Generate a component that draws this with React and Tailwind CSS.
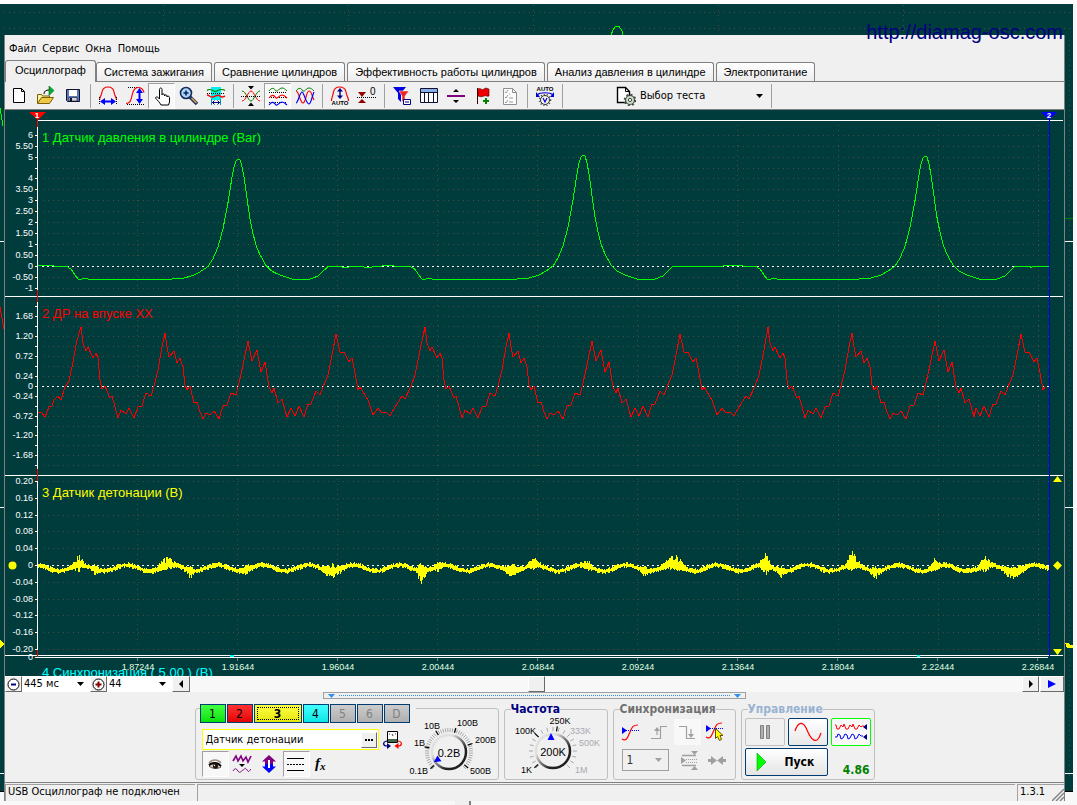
import { useState } from 'react';

const TABS = [
    'Осциллограф',
    'Система зажигания',
    'Сравнение цилиндров',
    'Эффективность работы цилиндров',
    'Анализ давления в цилиндре',
    'Электропитание',
];

const CHANNELS = [
    { id: '1', cls: 'w-[26px] bg-gradient-to-b from-[#40ff40] to-[#00e000] text-black border-[#003c74]' },
    { id: '2', cls: 'w-[26px] bg-gradient-to-b from-[#ff3030] to-[#e00000] text-black border-[#003c74]' },
    { id: '3', cls: 'w-[48px] bg-gradient-to-b from-[#ffff40] to-[#e6e600] text-black border-[#003c74] font-bold outline-1 outline-dotted outline-black -outline-offset-4' },
    { id: '4', cls: 'w-[26px] bg-gradient-to-b from-[#40ffff] to-[#00e6e6] text-black border-[#003c74]' },
    { id: '5', cls: 'w-[26px] bg-gradient-to-b from-[#cccccc] to-[#b0b0b0] text-[#808080] border-[#003c74]' },
    { id: '6', cls: 'w-[26px] bg-gradient-to-b from-[#cccccc] to-[#b0b0b0] text-[#808080] border-[#003c74]' },
    { id: 'D', cls: 'w-[26px] bg-gradient-to-b from-[#cccccc] to-[#b0b0b0] text-[#808080] border-[#003c74]' },
];

/* ---------- toolbar icons ---------- */

const ICONS = {
    new: (
        <path d="M4.5 2.5h8l3 3v11h-11zM12.5 2.5v3h3" fill="#fff" stroke="#000" />
    ),
    open: (
        <>
            <path d="M1.5 17V8.5h4l1 1.5h7v3" fill="#fff2a0" stroke="#7a6000" />
            <path d="M1.5 17.5l4-6h12l-4 6z" fill="#f0c848" stroke="#7a6000" />
            <path d="M8 8c0-3 2-4 5-4" fill="none" stroke="#000" />
            <path d="M13 0l5 4.500-5 5z" fill="#00b030" stroke="#006018" strokeWidth=".6" />
        </>
    ),
    save: (
        <>
            <path d="M3.500 3.500h13v12h-12l-1-1z" fill="#5a78b8" stroke="#101030" />
            <path d="M6 4h8v6H6z" fill="#fff" />
            <path d="M6 11.500h8V15H6z" fill="#d8d8d8" stroke="#101030" strokeWidth=".6" />
            <path d="M7 12h2v3H7z" fill="#101030" />
        </>
    ),
    width: (
        <>
            <path d="M1.500 14C1.500 11 3.500 10 4 6c.5-3 2-5 6-5s5.500 2 6 5c.5 4 2.500 5 2.500 8" fill="none" stroke="#f00" strokeWidth="1.200" />
            <path d="M1.500 11v8M18.500 11v8" stroke="#000" strokeDasharray="1 1" />
            <path d="M4 15.500h12" stroke="#00f" strokeWidth="2" />
            <path d="M2 15.500l5-3.500v7zM18 15.500L13 12v7z" fill="#00f" />
        </>
    ),
    height: (
        <>
            <path d="M3 1.500h9M2 18.500h17" stroke="#000" strokeDasharray="1 1" />
            <path d="M1 17.500c4 0 5-3 6-8s3-8 6-8c3 0 5 1.500 6 5" fill="none" stroke="#f00" strokeWidth="1.200" />
            <path d="M14.500 5v10" stroke="#00f" strokeWidth="2" />
            <path d="M14.500 2l3.500 5h-7zM14.500 18l3.500-5h-7z" fill="#00f" />
        </>
    ),
    hand: (
        <path d="M7.500 13V3.500c0-2 2.500-2 2.500 0V9c0-1.500 2.500-1.500 2.500 0v1c0-1.500 2.500-1.500 2.500 0v1c0-1.500 2.500-1 2.500.5V16l-1 3H9c-1-2.500-4-5-5.500-7 .5-2 2.500-1 4 1z" fill="#fff" stroke="#000" />
    ),
    zoom: (
        <>
            <path d="M11 11l7 7" stroke="#203060" strokeWidth="3.500" />
            <path d="M12.500 12l5 5" stroke="#d8a048" strokeWidth="1.600" />
            <circle cx="7" cy="7" r="5.500" fill="#a8d8f8" stroke="#182858" strokeWidth="1.600" />
            <path d="M4.500 7h5M7 4.500v5" stroke="#10205c" strokeWidth="1.600" />
        </>
    ),
    band: (
        <>
            <path d="M5 1h10v13H5z" fill="#00f0f0" />
            <path d="M1 4.500c3-3 6 1 8 1s6-4 10-1" fill="none" stroke="#008000" strokeWidth="1.200" />
            <path d="M1 7.500h18" stroke="#000" strokeDasharray="1 1" />
            <path d="M1 9c3 0 3 3 6 2s5-3 7-1 3 1 5 0" fill="none" stroke="#f00" strokeWidth="1.400" />
            <path d="M5.500 13v6M14.500 13v6" stroke="#0090a0" />
            <path d="M6 16.500h8M8.500 14.500l-2 2 2 2M11.500 14.500l2 2-2 2" fill="none" stroke="#000080" />
        </>
    ),
    collapse: (
        <>
            <path d="M1 5c4 0 6 10 9 10s5-10 9-10" fill="none" stroke="#008000" />
            <path d="M1 15c4 0 6-10 9-10s5 10 9 10" fill="none" stroke="#f00" />
            <path d="M0 10.500h20" stroke="#000" strokeDasharray="1 1" />
            <path d="M7 0h6l-3 3.500zM7 20h6l-3-3.500z" fill="#000" />
        </>
    ),
    stack: (
        <>
            <path d="M1 5c3-4 5-3 7 0 2 1 3-3 6-3 2 0 3 1 5 3" fill="none" stroke="#008000" />
            <path d="M1 6.500h18M1 11.500h18M1 16.500h18" stroke="#000" strokeDasharray="1 1" />
            <path d="M1 12c3-4 5-3 7 0 2 1 3-3 6-3 2 0 3 1 5 3" fill="none" stroke="#f00" strokeWidth="1.200" />
            <path d="M1 19c3-4 5-3 7 0 2 1 3-3 6-3 2 0 3 1 5 3" fill="none" stroke="#00f" strokeWidth="1.200" />
        </>
    ),
    overlay: (
        <>
            <path d="M1 5c3-4 5-3 7 0 2 1 3-3 6-3 2 0 3 1 5 3" fill="none" stroke="#008000" />
            <path d="M1 5c3 0 4 12 7 12s3-12 6-12 3 6 5 9" fill="none" stroke="#f00" strokeWidth="1.200" />
            <path d="M1 17c2 0 4-11 6-11s4 12 7 12c2 0 3-8 5-12" fill="none" stroke="#00f" strokeWidth="1.200" />
        </>
    ),
    autoHeight: (
        <>
            <path d="M1.500 15C1.500 11 3 10 3.500 6c.5-3 2-5 6-5s6 2 6.500 5c.5 4 2.500 5 2.500 9" fill="none" stroke="#f00" strokeWidth="1.200" />
            <path d="M10 4v7" stroke="#000080" strokeWidth="1.400" />
            <path d="M10 2l3 3.500H7zM10 13l3-3.500H7z" fill="#000080" />
            <text x="10" y="19" textAnchor="middle" fontSize="6" fontWeight="bold">AUTO</text>
        </>
    ),
    zero: (
        <>
            <path d="M1 6h8l-4 5zM1 17h8l-4-4z" fill="#900000" />
            <path d="M0 11.500h20" stroke="#000" strokeDasharray="1 1" />
            <text x="13" y="9" fontSize="10">0</text>
        </>
    ),
    filter: (
        <>
            <path d="M1 1h13l-5 6v9l-3-3V7z" fill="#0000e0" />
            <path d="M7 5h10l-4 5v8l-3-3v-5z" fill="#f02020" stroke="#fff" strokeWidth=".5" />
            <path d="M11.500 13.500h7v5h-7z" fill="#fff" stroke="#000080" />
            <path d="M13 16h4" stroke="#000080" />
        </>
    ),
    table: (
        <>
            <path d="M1.500 2.500h17v14h-17z" fill="#fff" stroke="#101030" />
            <path d="M2 3h16v3H2z" fill="#88b0e8" />
            <path d="M1 6.500h18M5.500 6v10M9.500 6v10M14.500 6v10" stroke="#101030" />
        </>
    ),
    split: (
        <>
            <path d="M1 10h18" stroke="#800080" strokeWidth="2" />
            <path d="M10 3l3 3H7zM10 17l3-3H7z" fill="#000" />
        </>
    ),
    flag: (
        <>
            <path d="M4.500 2v16" stroke="#400000" />
            <path d="M5 3c3-2 3 2 6 0s3 0 5 0v7c-2 1-3-1-5 0s-3 1-6 0z" fill="#f00000" stroke="#500000" strokeWidth=".6" />
            <path d="M10 15h6M13 12v6" stroke="#008000" strokeWidth="2" />
        </>
    ),
    checklist: (
        <>
            <path d="M3.500 2.500h9l4 4v12h-13z" fill="#fbfbfb" stroke="#909090" />
            <path d="M12.500 2.500v4h4" fill="none" stroke="#909090" />
            <path d="M5 6l1 1 2-3M5 11l1 1 2-3M5 16l1 1 2-3M9 8h1M9 12h4M9 16h4" fill="none" stroke="#909090" strokeWidth=".9" />
        </>
    ),
    autoMeter: (
        <>
            <text x="10" y="5" textAnchor="middle" fontSize="6" fontWeight="bold">AUTO</text>
            <path d="M2 9c3-3 13-3 16 0" fill="none" stroke="#0000d0" strokeWidth="1.200" />
            <path d="M1 6v5h4zM19 6v5h-4z" fill="#0000d0" />
            <circle cx="10" cy="14" r="5.500" fill="none" stroke="#404040" strokeWidth="1.600" strokeDasharray="1 2" />
            <circle cx="10" cy="14" r="4.500" fill="#f4f4f4" stroke="#303030" />
            <path d="M8 12l2 4 2-4" fill="none" stroke="#0000d0" strokeWidth="1.200" />
        </>
    ),
    testPage: (
        <>
            <path d="M1.500 1.500h8l4 4v11h-12z" fill="#fff" stroke="#000" strokeWidth="1.400" />
            <path d="M9.500 1.500v4h4" fill="none" stroke="#000" />
            <circle cx="14" cy="14" r="4.500" fill="#c8dcc8" stroke="#404840" strokeWidth="1.200" />
            <circle cx="14" cy="14" r="5.500" fill="none" stroke="#404840" strokeWidth="1.600" strokeDasharray="2 2.300" />
            <circle cx="14" cy="14" r="1.600" fill="#fff" stroke="#404840" />
        </>
    ),
    eye: (
        <>
            <path d="M4 9c3-4 9-4 12 0" fill="none" stroke="#a09088" strokeWidth="1.400" />
            <path d="M4 12c3-3 9-3 12 1-3 2-9 2-12-1z" fill="#d8d0c8" stroke="#504840" />
            <path d="M4 11c3-3 9-3 12 1" fill="none" stroke="#000" strokeWidth="1.800" />
            <circle cx="10.500" cy="12" r="2.600" fill="#201810" />
            <circle cx="9.500" cy="11.500" r=".7" fill="#fff" />
        </>
    ),
    smooth: (
        <>
            <path d="M1 7l3-5 2 5 3-5 2 5 3-4 2 5 3-6" fill="none" stroke="#800080" strokeWidth="1.600" />
            <path d="M7 10h6l-3 3z" fill="#000" />
            <path d="M1 17c2-3 3-3 5 0s3 0 5-1 2-3 4 0 2 1 4-1" fill="none" stroke="#800080" />
        </>
    ),
    move: (
        <>
            <path d="M10 1l7 6.500h-3V10H6V7.500H3z" fill="#800080" />
            <path d="M10 19l7-6.500h-3V10H6v2.500H3z" fill="#00f" />
            <path d="M10 6v8" stroke="#fff" strokeWidth="2" />
        </>
    ),
    lines: (
        <>
            <path d="M1 4.500h17M1 16.500h17" stroke="#000" />
            <path d="M1 10.500h17" stroke="#000" strokeDasharray="2 1" />
        </>
    ),
    fx: (
        <text x="2" y="14" fontSize="15" fontWeight="bold" fontStyle="italic" fontFamily="Liberation Serif, serif">
            f<tspan fontSize="11" dy="2">x</tspan>
        </text>
    ),
    device: (
        <>
            <path d="M4.500 1.500h10v11h-10z" fill="#fff" stroke="#000" />
            <path d="M5 9h9v3H5z" fill="#406848" />
            <path d="M6 4h1M9 4l1 2M12 4h1" stroke="#404040" />
            <path d="M4 11c-5 1-4 5 0 5" fill="none" stroke="#000080" strokeWidth="1.200" />
            <path d="M4 13l4 3-4 3z" fill="#000080" />
            <path d="M15 11c5 1 4 5 0 5" fill="none" stroke="#f00" strokeWidth="1.200" />
            <path d="M15.500 13l-4 3 4 3z" fill="#f00" />
        </>
    ),
    syncLevel: (
        <>
            <path d="M1 17c5 3 6-3 8-7s2-7 8-7" fill="none" stroke="#f00" strokeWidth="1.200" />
            <path d="M5 8.500h13" stroke="#00f" strokeDasharray="1 1" />
            <path d="M1 5l5 3.500L1 12z" fill="#00f" />
        </>
    ),
    syncPick: (
        <>
            <path d="M1 15c5 3 6-3 8-7s2-7 8-7" fill="none" stroke="#f00" strokeWidth="1.200" />
            <path d="M5 6.500h13" stroke="#00f" strokeDasharray="1 1" />
            <path d="M1 3l5 3.500L1 10z" fill="#00f" />
            <path d="M10.500 6.500v10l2-2 2 4 2-1-1.500-4h3z" fill="#ff0" stroke="#605000" />
        </>
    ),
    rise: (
        <>
            <path d="M2 16.500h9.500v-12H18" fill="none" stroke="#a0a0a0" strokeWidth="1.200" />
            <path d="M8 6v7" stroke="#a0a0a0" strokeWidth="1.200" />
            <path d="M8 5l3 4H5z" fill="#a0a0a0" />
        </>
    ),
    fall: (
        <>
            <path d="M2 4.500h7.500v12H18" fill="none" stroke="#a0a0a0" strokeWidth="1.200" />
            <path d="M14 7v7" stroke="#a0a0a0" strokeWidth="1.200" />
            <path d="M14 16l3-4h-6z" fill="#a0a0a0" />
        </>
    ),
    spread: (
        <>
            <path d="M2 5.500h14M2 15.500h14" stroke="#a0a0a0" strokeWidth="1.400" />
            <path d="M11 1h7l-3.500 4zM11 20h7l-3.500-4z" fill="#a0a0a0" />
            <path d="M6 9.500h11M6 12.500h11" stroke="#a0a0a0" strokeDasharray="1 1" />
            <path d="M1 7l5 3.500L1 14z" fill="#a0a0a0" />
        </>
    ),
    squeeze: (
        <path d="M1 9h3V6l6 4.500L4 15v-3H1zM19 9h-3V6l-6 4.500 6 4.500v-3h3z" fill="#a0a0a0" />
    ),
};

function Icon({ name }) {
    return (
        <svg className="w-5 h-5 shrink-0 font-['Liberation_Sans',sans-serif]" viewBox="0 0 20 20" aria-hidden="true">
            {ICONS[name]}
        </svg>
    );
}

function ToolButton({ icon, label, pressed, flat }) {
    return (
        <button
            type="button"
            aria-label={label}
            className={`w-[27px] h-[26px] flex items-center justify-center shrink-0 ${flat ? 'bg-[#f8f8f8]' : ''} ${pressed ? 'bg-[#f8f8f8] border border-[#a0a0a0] border-r-white border-b-white' : ''}`}
        >
            <Icon name={icon} />
        </button>
    );
}

function Separator() {
    return (
        <div className="w-2 h-6 flex justify-center shrink-0">
            <div className="w-px bg-[#a0a0a0]" />
        </div>
    );
}

function DownArrow({ className }) {
    return (
        <svg className={`w-[7px] h-1 shrink-0 pointer-events-none ${className}`} viewBox="0 0 7 4" aria-hidden="true">
            <path d="M0 0h7L3.500 4z" fill="currentColor" />
        </svg>
    );
}

/* ---------- scope data ---------- */

const LEFT = 38;
const RIGHT = 1049;

const ROWS = [
    {
        top: 127, bottom: 290, zero: 266,
        ticks: [[135, '6'], [146, '5.50'], [157, '5'], [168, ''], [178, '4'], [189, '3.50'], [200, '3'], [211, '2.50'], [222, '2'], [233, '1.50'], [244, '1'], [255, '0.50'], [266, '0'], [277, '-0.50'], [288, '-1']],
    },
    {
        top: 302, bottom: 469, zero: 386,
        ticks: [[306, ''], [316, '1.68'], [326, ''], [336, '1.20'], [346, ''], [356, '0.72'], [366, ''], [376, '0.24'], [386, '0'], [396, '-0.24'], [406, ''], [416, '-0.72'], [426, ''], [435, '-1.20'], [445, ''], [455, '-1.68'], [465, '']],
    },
    {
        top: 481, bottom: 649, zero: 565,
        ticks: [[481, '0.20'], [498, '0.16'], [515, '0.12'], [531, '0.08'], [548, '0.04'], [565, '0'], [582, '-0.04'], [599, '-0.08'], [615, '-0.12'], [632, '-0.16'], [649, '-0.20']],
    },
];

const TIMES = ['1.87244', '1.91644', '1.96044', '2.00444', '2.04844', '2.09244', '2.13644', '2.18044', '2.22444', '2.26844'];

// pressure pulse, x is the distance from the peak
const PRESSURE_RISE = [
    [-66, 279], [-54, 278], [-44, 275], [-37, 271], [-30, 266], [-25, 258], [-20, 246], [-15, 227], [-12, 211], [-10, 200],
    [-8, 187], [-6, 174], [-4, 163], [-2, 157],
];

const PRESSURE_FALL = [
    [0, 155], [2, 156], [4, 163], [6, 174], [8, 188], [10, 203], [12, 217], [15, 232], [18, 244], [22, 254], [28, 265],
    [34, 271], [42, 275], [54, 279], [72, 279], [80, 276], [86, 270], [90, 266], [100, 266], [106, 267], [120, 266], [130, 267],
    [150, 265], [160, 266], [172, 266], [177, 269], [181, 275], [184, 279], [186, 280], [190, 278], [194, 279],
];

const VACUUM_START = [
    [38, 413], [41, 412], [45, 417], [49, 407], [52, 406], [54, 400], [58, 396], [61, 400], [65, 387], [69, 381], [73, 362], [77, 340],
];

const VACUUM = [
    [81, 327], [83, 343], [86, 351], [88, 347], [93, 358], [96, 353], [98, 358], [100, 380], [102, 389], [105, 386], [110, 398],
    [112, 396], [115, 407], [118, 418], [121, 410], [126, 414], [129, 408], [134, 418], [138, 407], [142, 406], [146, 393],
    [151, 396], [154, 386], [158, 370], [162, 347], [165, 333], [167, 347], [169, 357], [174, 351], [177, 363], [180, 358],
    [183, 367], [185, 385], [187, 390], [190, 386], [194, 403], [197, 402], [200, 412], [203, 419], [206, 413], [210, 415],
    [214, 411], [219, 419], [223, 406], [227, 405], [231, 393], [236, 395], [239, 383], [243, 365], [248, 341], [252, 361],
    [257, 350], [261, 372], [265, 362], [269, 387], [272, 393], [274, 388], [278, 403], [282, 399], [287, 417], [291, 408],
    [295, 416], [299, 406], [304, 417], [308, 404], [311, 404], [316, 391], [320, 395], [323, 387], [328, 375], [333, 350],
    [336, 334], [340, 352], [344, 352], [349, 362], [352, 358], [355, 373], [358, 390], [360, 387], [368, 400], [373, 415],
    [378, 408], [382, 413], [386, 412], [390, 416], [395, 407], [402, 396], [405, 399], [411, 386], [415, 375], [420, 350],
];

// x, half width, rise above and drop below the trace
const BURSTS = [
    [78, 7, 9, 5], [95, 5, 1, 5], [166, 10, 8, 3], [189, 6, 2, 7], [245, 8, 3, 3], [332, 16, 4, 5], [421, 6, 8, 13],
    [438, 5, 3, 4], [512, 10, 5, 4], [534, 7, 8, 2], [588, 6, 5, 3], [645, 6, 2, 4], [674, 14, 9, 3], [765, 6, 13, 9],
    [780, 6, 2, 6], [852, 8, 13, 4], [875, 7, 2, 9], [934, 6, 6, 3], [985, 8, 8, 5], [1014, 14, 4, 9],
];

const toPath = (pts) => 'M' + pts.map(([x, y]) => `${x} ${y}`).join('L');
const shift = (pts, dx) => pts.map(([x, y]) => [x + dx, y]);

function pressurePath() {
    const pts = [[-106, 155], [238, 159], [583, 155], [925, 156]].flatMap(([peak, top]) =>
        [...PRESSURE_RISE, ...PRESSURE_FALL].map(([x, y]) => [peak + x, 279 - ((279 - y) * (279 - Math.max(top, y > 250 ? 155 : top))) / 124])
    );
    return toPath([[LEFT, 266], ...pts.filter(([x]) => x > LEFT && x <= RIGHT), [RIGHT, 267]]);
}

function vacuumPath() {
    const pts = [
        ...VACUUM_START,
        ...VACUUM,
        ...shift(VACUUM, 344),
        ...shift(VACUUM.filter(([x]) => x < 290), 687),
        ...shift(VACUUM.filter(([x]) => x > 290), 685),
    ];
    return toPath(pts.filter(([x]) => x <= RIGHT));
}

function knockPath() {
    let seed = 7;
    const rnd = () => {
        seed = (seed * 16807) % 2147483647;
        return seed / 2147483647;
    };
    let d = '';
    for (let x = LEFT; x < RIGHT; x++) {
        const mid = 568 - 3 * Math.cos(((x - 81) / 45.4) * 2 * Math.PI);
        let up = 1 + rnd() * 2;
        let down = 1 + rnd() * 2;
        BURSTS.forEach(([bx, w, bu, bd]) => {
            const k = 1 - Math.abs(x - bx) / w;
            if (k > 0) {
                up += (bu + 1) * k * (0.2 + 0.8 * rnd());
                down += bd * k * (0.2 + 0.8 * rnd());
            }
        });
        d += `M${x}.5 ${Math.round(mid - up)}V${Math.round(mid + down)}`;
    }
    return d;
}

function Scope() {
    return (
        <svg
            className="block w-full h-auto bg-[#003c3c] font-['Liberation_Sans',sans-serif]"
            viewBox="5 110 1059 566"
            role="img"
            aria-label="Осциллограмма"
        >
            <g shapeRendering="crispEdges" fill="none">
                {/* Grid */}
                {ROWS.map((row) => (
                    <g key={row.top} stroke="#504844">
                        {row.ticks.map(([y]) => (
                            <path key={y} d={`M43 ${y}.5H${RIGHT}`} strokeDasharray="1 4" />
                        ))}
                        {TIMES.map((t, i) => (
                            <path key={t} d={`M${137 + i * 100 + (i > 6 ? 1 : 0)}.5 ${row.top - 2}V${row.bottom}`} strokeDasharray="1 4" />
                        ))}
                    </g>
                ))}

                {/* Row separators */}
                <path d="M38 120.500H1063M5 296.500H1063M5 475.500H1063M5 655.500H1063M35 657.500H1048" stroke="#fff" />

                {/* Cursors */}
                <path d="M37.500 118V657" stroke="#f00" />
                <path d="M1049.500 118V657" stroke="#0000e0" />
                <path d="M230 655.500h4M917 655.500h3" stroke="#0ff" strokeWidth="2" />

                {/* Vertical axes */}
                {ROWS.map((row) => (
                    <g key={row.top} stroke="#fff">
                        <path d={`M37.500 ${row.top}V${row.bottom}`} />
                        {row.ticks.map(([y]) => (
                            <path key={y} d={`M35 ${y}.5h3`} />
                        ))}
                        <path d={`M42 ${row.zero}.5H${RIGHT}`} strokeDasharray="2 3" />
                    </g>
                ))}
                {TIMES.map((t, i) => (
                    <path key={t} d={`M${137 + i * 100}.5 658v3`} stroke="#808080" />
                ))}

                <path d={pressurePath()} stroke="#0f0" />
                <path d={vacuumPath()} stroke="#f00" />
                <path d={knockPath()} stroke="#ff0" />
            </g>

            <g fill="#fff" fontSize="9" textAnchor="end">
                {ROWS.flatMap((row) => row.ticks.filter(([, t]) => t).map(([y, t]) => (
                    <text key={`${row.top}${t}`} x="33" y={y + 3}>{t}</text>
                )))}
                <text x="33" y="660">0</text>
            </g>

            <g fontSize="13">
                <text x="42" y="142" fill="#0f0">1 Датчик давления в цилиндре (Bar)</text>
                <text x="42" y="318" fill="#f00">2 ДР на впуске XX</text>
                <text x="42" y="497" fill="#ff0">3 Датчик детонации (В)</text>
                <text x="42" y="677" fill="#0ff">4 Синхронизация ( 5.00 ) (В)</text>
            </g>
            <g fill="#e0ffe0" fontSize="9" textAnchor="middle">
                {TIMES.map((t, i) => (
                    <text key={t} x={138 + i * 100} y="670">{t}</text>
                ))}
            </g>

            {/* Cursor flags and level markers */}
            <path d="M29 112h17l-8 8z" fill="#f00" />
            <path d="M1041 112h16l-8 8z" fill="#00f" />
            <g fill="#fff" fontSize="8" fontWeight="bold" textAnchor="middle">
                <text x="37" y="118">1</text>
                <text x="1049" y="118">2</text>
            </g>
            <g fill="#ff0">
                <circle cx="12.500" cy="565.500" r="4" />
                <path d="M1053 482h9l-4.500-6zM1053 649h9l-4.500 6zM1057.500 561l4.500 4.500-4.500 4.500-4.500-4.500z" />
            </g>
        </svg>
    );
}

/* ---------- rotary knobs ---------- */

function Knob({ label, value, marks, pointer, labels, minor }) {
    const [pos, setPos] = useState(value);
    const ray = (deg, r1, r2) => {
        const a = (deg * Math.PI) / 180;
        return `M${43 + r1 * Math.cos(a)} ${35 - r1 * Math.sin(a)}L${43 + r2 * Math.cos(a)} ${35 - r2 * Math.sin(a)}`;
    };
    const ticks = [];
    for (let deg = -45; deg <= 225; deg += minor) ticks.push(ray(deg, 20, 24));

    return (
        <label className="relative block w-[92px] h-[62px]">
            <svg className="w-full h-full font-['Liberation_Sans',sans-serif]" viewBox="0 0 92 62" aria-hidden="true">
                <defs>
                    <linearGradient id="knob-rim" x1="0" y1="0" x2="1" y2="1">
                        <stop offset=".3" stopColor="#e0e0e0" />
                        <stop offset=".7" stopColor="#202020" />
                    </linearGradient>
                </defs>
                <path d={ticks.join('')} stroke="#a8a8a8" />
                <path d={marks.map((m) => ray(m, 20, 25)).join('')} stroke="#000" strokeWidth="1.200" />
                <circle cx="43" cy="35" r="17" fill="#f0f0f0" stroke="url(#knob-rim)" strokeWidth="2.500" />
                <path d="M-3.500 3L0-4 3.500 3z" fill="#00f" transform={pointer} />
                <text x="43" y="40" fontSize="11" textAnchor="middle">{pos}</text>
                {labels.map(([t, x, y, anchor, dim]) => (
                    <text key={t} x={x} y={y} fontSize="9" textAnchor={anchor} fill={dim ? '#a8a8b0' : '#000'}>{t}</text>
                ))}
            </svg>
            <input
                type="range"
                min="0"
                max={labels.length - 1}
                aria-label={label}
                className="absolute inset-0 w-full h-full opacity-0"
                onChange={(e) => setPos(labels[Number(e.target.value)][0])}
            />
        </label>
    );
}

/* ---------- window parts ---------- */

function Toolbar() {
    return (
        <div className="flex items-center h-7 border-b border-[#808080]">
            <ToolButton icon="new" label="Новый" />
            <ToolButton icon="open" label="Открыть" />
            <ToolButton icon="save" label="Сохранить" />
            <Separator />
            <ToolButton icon="width" label="Ширина" />
            <ToolButton icon="height" label="Высота" />
            <ToolButton icon="hand" label="Перемещение" pressed />
            <ToolButton icon="zoom" label="Увеличить" />
            <ToolButton icon="band" label="Выделение" />
            <Separator />
            <ToolButton icon="collapse" label="Сжать" />
            <ToolButton icon="stack" label="Раздельно" pressed />
            <ToolButton icon="overlay" label="Вместе" />
            <Separator />
            <ToolButton icon="autoHeight" label="Авто" />
            <ToolButton icon="zero" label="Ноль" />
            <Separator />
            <ToolButton icon="filter" label="Фильтр" />
            <ToolButton icon="table" label="Таблица" />
            <ToolButton icon="split" label="Разделить" />
            <ToolButton icon="flag" label="Метка" />
            <ToolButton icon="checklist" label="Список" />
            <Separator />
            <ToolButton icon="autoMeter" label="Автоизмерение" />
            <Separator />
            <label className="flex items-center pl-[50px] w-[201px]">
                <Icon name="testPage" />
                <select aria-label="Выбор теста" className="appearance-none flex-1 min-w-0 pl-1 bg-transparent">
                    <option>Выбор теста</option>
                </select>
                <DownArrow className="mr-1" />
            </label>
            <Separator />
        </div>
    );
}

function BevelButton({ label, className, children }) {
    return (
        <button
            type="button"
            aria-label={label}
            className={`h-4 flex items-center justify-center shrink-0 bg-[#f0f0f0] border border-white border-r-[#696969] border-b-[#696969] ${className}`}
        >
            {children}
        </button>
    );
}

function ScrollRow() {
    return (
        <div className="flex h-4 bg-white">
            <BevelButton label="Уменьшить" className="w-[17px]">
                <svg className="w-[13px] h-[13px]" viewBox="0 0 13 13" aria-hidden="true">
                    <circle cx="6.500" cy="6.500" r="5.500" fill="#fff" stroke="#000" />
                    <path d="M4 6.500h5" stroke="#000080" strokeWidth="2" />
                </svg>
            </BevelButton>
            <label className="flex items-center w-[68px]">
                <select aria-label="Развёртка" className="appearance-none flex-1 min-w-0 pl-0.5">
                    <option>445 мс</option>
                </select>
                <DownArrow className="mr-1.5" />
            </label>
            <BevelButton label="Увеличить" className="w-[17px]">
                <svg className="w-[13px] h-[13px]" viewBox="0 0 13 13" aria-hidden="true">
                    <circle cx="6.500" cy="6.500" r="5.500" fill="#fff" stroke="#000" />
                    <path d="M3.500 6.500h6M6.500 3.500v6" stroke="#800000" strokeWidth="2" />
                </svg>
            </BevelButton>
            <label className="flex items-center w-[65px]">
                <select aria-label="Масштаб" className="appearance-none flex-1 min-w-0 pl-0.5">
                    <option>44</option>
                </select>
                <DownArrow className="mr-1.5" />
            </label>
            <BevelButton label="Назад" className="w-[18px]">
                <svg className="w-1 h-2" viewBox="0 0 4 8" aria-hidden="true"><path d="M4 0v8L0 4z" /></svg>
            </BevelButton>
            <input
                type="range"
                aria-label="Прокрутка"
                min="0"
                max="200"
                defaultValue="83"
                className="appearance-none flex-1 min-w-0 h-4 bg-[#f8f8f8] [&::-webkit-slider-thumb]:appearance-none [&::-webkit-slider-thumb]:w-[17px] [&::-webkit-slider-thumb]:h-4 [&::-webkit-slider-thumb]:bg-[#f0f0f0] [&::-webkit-slider-thumb]:border [&::-webkit-slider-thumb]:border-white [&::-webkit-slider-thumb]:border-r-[#696969] [&::-webkit-slider-thumb]:border-b-[#696969]"
            />
            <BevelButton label="Вперёд" className="w-[17px]">
                <svg className="w-1 h-2" viewBox="0 0 4 8" aria-hidden="true"><path d="M0 0v8l4-4z" /></svg>
            </BevelButton>
            <BevelButton label="Воспроизвести" className="w-6 ml-px">
                <svg className="w-2 h-2" viewBox="0 0 8 8" aria-hidden="true"><path d="M0 0v8l8-4z" fill="#00f" /></svg>
            </BevelButton>
        </div>
    );
}

function ChannelGroup() {
    const [name, setName] = useState('Датчик детонации');
    return (
        <div className="flex mt-1.5 border border-[#c0c0c0] rounded-[3px]">
            <div className="flex flex-col pl-1.5">
                <div className="flex gap-px -mt-[5px] -ml-0.5 pr-1.5 bg-[#f0f0f0]">
                    {CHANNELS.map((c) => (
                        <button key={c.id} type="button" className={`h-[19px] flex items-center justify-center border text-[12px] ${c.cls}`}>
                            {c.id}
                        </button>
                    ))}
                </div>
                <div className="flex items-center gap-1 mt-1.5">
                    <div className="flex items-center w-[177px] h-[21px] p-px bg-white border border-[#ff0]">
                        <input
                            aria-label="Имя канала"
                            value={name}
                            onChange={(e) => setName(e.target.value)}
                            className="flex-1 min-w-0 pl-0.5 outline-none"
                        />
                        <BevelButton label="Выбрать датчик" className="w-4">
                            <svg className="w-2 h-0.5" viewBox="0 0 8 2" aria-hidden="true"><path d="M0 0h2v2H0zM3 0h2v2H3zM6 0h2v2H6z" /></svg>
                        </BevelButton>
                    </div>
                    <button type="button" aria-label="Подключение"><Icon name="device" /></button>
                </div>
                <div className="flex items-center mt-px gap-x-0">
                    <ToolButton icon="eye" label="Видимость" pressed />
                    <ToolButton icon="smooth" label="Сглаживание" />
                    <ToolButton icon="move" label="Смещение" />
                    <ToolButton icon="lines" label="Линии" pressed />
                    <ToolButton icon="fx" label="Функция" />
                </div>
            </div>
            <div className="-ml-2.5 pt-2">
                <Knob
                    label="Чувствительность"
                    value="0.2В"
                    minor={6}
                    marks={[222, 168, 122, 74, 20, -40]}
                    pointer="translate(31 43) rotate(-125)"
                    labels={[
                        ['0.1В', 22, 57, 'end'],
                        ['1В', 19, 29, 'end'],
                        ['10В', 34, 12, 'end'],
                        ['100В', 51, 9, 'start'],
                        ['200В', 69, 26, 'start'],
                        ['500В', 64, 57, 'start'],
                    ]}
                />
            </div>
        </div>
    );
}

function Group({ title, titleClass, className, children }) {
    return (
        <fieldset className="border border-[#c0c0c0] rounded-[3px]">
            <legend className={`ml-1.5 h-3.5 leading-3.5 text-[12px] font-bold ${titleClass}`}>{title}</legend>
            <div className={className}>{children}</div>
        </fieldset>
    );
}

function ControlPanel() {
    return (
        <div className="flex justify-center gap-[5px] pt-[3px] pb-0.5">
            <ChannelGroup />
            <Group title="Частота" titleClass="text-[#000080]" className="px-[5px]">
                <Knob
                    label="Частота"
                    value="200K"
                    minor={15}
                    marks={[222, 136, 80]}
                    pointer="translate(41 21)"
                    labels={[
                        ['1K', 22, 57, 'end'],
                        ['100K', 26, 18, 'end'],
                        ['250K', 50, 8, 'middle'],
                        ['333K', 60, 18, 'start', true],
                        ['500K', 69, 30, 'start', true],
                        ['1M', 65, 57, 'start', true],
                    ]}
                />
            </Group>
            <Group title="Синхронизация" titleClass="text-[#707070]" className="flex flex-col gap-0.5 px-1 pt-[3px]">
                <div className="flex gap-px">
                    <ToolButton icon="syncLevel" label="Уровень" />
                    <ToolButton icon="rise" label="Фронт" />
                    <ToolButton icon="fall" label="Спад" flat />
                    <ToolButton icon="syncPick" label="Выбор уровня" />
                </div>
                <div className="flex items-center">
                    <label className="flex items-center w-[47px] h-[22px] mr-2 ml-1 border border-[#a0a0a0] text-[#303030]">
                        <select aria-label="Канал синхронизации" className="appearance-none flex-1 min-w-0 pl-1 text-[12px]">
                            <option>1</option>
                        </select>
                        <DownArrow className="mr-1.5 text-[#a0a0a0]" />
                    </label>
                    <ToolButton icon="spread" label="Развести" />
                    <ToolButton icon="squeeze" label="Свести" />
                </div>
            </Group>
            <Group title="Управление" titleClass="text-[#99b4d1]" className="flex flex-col gap-0.5 px-[3px] pt-0.5 pb-0.5">
                <div className="flex gap-[3px]">
                    <button type="button" aria-label="Пауза" className="w-10 h-7 flex items-center justify-center border border-[#c0c0c0] rounded-[2px]">
                        <svg className="w-3 h-4" viewBox="0 0 12 16" aria-hidden="true">
                            <path d="M1.500 1.500h3v13h-3zM7.500 1.500h3v13h-3z" fill="#b0b0b0" stroke="#808080" />
                        </svg>
                    </button>
                    <button type="button" aria-label="Синус" className="w-10 h-7 flex items-center justify-center border border-[#003c74] rounded-[2px] bg-gradient-to-b from-white to-[#e8e8e8]">
                        <svg className="w-7 h-5" viewBox="0 0 28 20" aria-hidden="true">
                            <path d="M1 9C4 0 9-2 13 8s10 16 14 3" fill="none" stroke="#f00" strokeWidth="1.200" />
                        </svg>
                    </button>
                    <button type="button" aria-label="Запись" className="w-10 h-7 flex items-center justify-center border border-[#0f0] rounded-[2px] bg-[#f8f8f8]">
                        <svg className="w-8 h-5" viewBox="0 0 32 20" fill="none" aria-hidden="true">
                            <path d="M0 3h1l1 4h2l2-4 2 2 1-3 2 5h2l2-4 2 2 1-3 2 5h2l2-4 2 2 1-1h2" stroke="#f00" />
                            <path d="M0 15h2l1-3 2 1 1 4 2-1 2-4 2 1 1 4 2-1 2-4 2 1 1 4 2-1 2-4 2 2h2" stroke="#00f" />
                            <path d="M32 2v6l-4-3zM32 12v6l-4-3z" fill="#000080" />
                        </svg>
                    </button>
                </div>
                <div className="flex items-end">
                    <button type="button" className="w-[83px] h-7 flex items-center pl-2.5 gap-[18px] border border-[#003c74] rounded-[2px] bg-gradient-to-b from-white to-[#e4e4e4] text-[12px] font-bold">
                        <svg className="w-[11px] h-[18px]" viewBox="0 0 11 18" aria-hidden="true">
                            <path d="M1 0v18l9-9z" fill="#0f0" stroke="#00a000" strokeWidth=".6" />
                        </svg>
                        Пуск
                    </button>
                    <span className="flex-1 text-right pr-px text-[12px] leading-3 font-bold text-[#008000]">4.86</span>
                </div>
            </Group>
        </div>
    );
}

function Backdrop() {
    return (
        <div className="absolute inset-x-0 top-1 mr-1 h-[788px] bg-[#003c3c] border-b border-black overflow-hidden">
            <svg className="block w-full" viewBox="0 4 1073 788" shapeRendering="crispEdges" fill="none" aria-hidden="true">
                <path d="M4 12.500H1070M4 28.500H1070" stroke="#504844" strokeDasharray="1 4" />
                <path d="M163.500 5v30M348.500 5v30M533.500 5v30M718.500 5v30M903.500 5v30M1069.500 40v740" stroke="#504844" strokeDasharray="1 4" />
                <path d="M611 35l2-5 3-4h3l3 5v4M0 108l3 18" stroke="#0f0" />
                <path d="M0 307l4 22" stroke="#f00" />
                <path d="M0 241.500h4M1065 241.500h8M1065 507.500h8M0 507.500h4M0 773.500h4M1065 773.500h8" stroke="#fff" />
                <path d="M1065 218.500h8" stroke="#008000" />
                <path d="M0 640v8l4-4zM1065 643h3l2 2h3v3h-6z" fill="#ff0" />
            </svg>
        </div>
    );
}

export default function App() {
    return (
        <div className="relative min-h-screen bg-[#f8f8f8] pt-[35px] pl-1 pr-3 text-[11px] leading-[14px] text-black font-['DejaVu_Sans_Condensed','Liberation_Sans',sans-serif]">
            <div className="absolute inset-x-0 top-0 h-1 bg-white" />
            <Backdrop />
            <a
                href="http://diamag-osc.com"
                className="absolute top-5 right-[14px] z-10 text-[20px] leading-6 text-[#000080] font-['Liberation_Sans',sans-serif]"
            >
                http://diamag-osc.com
            </a>

            <div className="relative bg-[#f0f0f0] border-x border-[#808080]">
                {/* Menu */}
                <nav className="flex items-center gap-1.5 h-[25px] pt-0.5 px-1">
                    {['Файл', 'Сервис', 'Окна', 'Помощь'].map((m) => (
                        <button key={m} type="button">{m}</button>
                    ))}
                </nav>

                {/* Tabs */}
                <div role="tablist" className="flex items-end h-[22px] border-b border-[#808080] font-['Liberation_Sans',sans-serif]">
                    {TABS.map((t, i) => (
                        <button
                            key={t}
                            type="button"
                            role="tab"
                            aria-selected={i === 0}
                            className={`border border-[#808080] border-b-0 rounded-t-[3px] whitespace-nowrap ${i === 0
                                ? 'h-[22px] px-[9px] -mb-px pb-1 bg-[#f0f0f0]'
                                : 'h-[19px] px-[7px] mr-0.5 bg-gradient-to-b from-white to-[#ececec]'}`}
                        >
                            {t}
                        </button>
                    ))}
                </div>

                <Toolbar />
                <Scope />
                <ScrollRow />

                {/* Splitter */}
                <div className="flex items-center justify-between mx-auto w-[423px] h-[7px] px-1 border border-[#a0a0a0] text-[#3090f0]">
                    <DownArrow className="" />
                    <div className="flex-1 mx-1 border-t border-dotted border-[#3090f0]" />
                    <DownArrow className="" />
                </div>

                <ControlPanel />

                {/* Status bar */}
                <div className="flex items-stretch gap-0.5 h-[19px] pt-px border-t border-[#808080]">
                    <div className="w-[190px] pl-0.5 border-t border-l border-[#a0a0a0] whitespace-nowrap">USB Осциллограф не подключен</div>
                    <div className="flex-1 border-t border-l border-[#a0a0a0]" />
                    <div className="flex items-start justify-between w-[47px] pl-0.5 border-t border-l border-[#a0a0a0]">
                        1.3.1
                        <svg className="w-3 h-3 self-end" viewBox="0 0 12 12" aria-hidden="true">
                            <path d="M0 12L12 0M4 12l8-8M8 12l4-4" stroke="#808080" strokeWidth="1.400" />
                        </svg>
                    </div>
                </div>
            </div>
            <div className="w-4 h-1 ml-[451px] bg-[#f0f0f0] border-r-2 border-[#808080]" />
        </div>
    );
}
